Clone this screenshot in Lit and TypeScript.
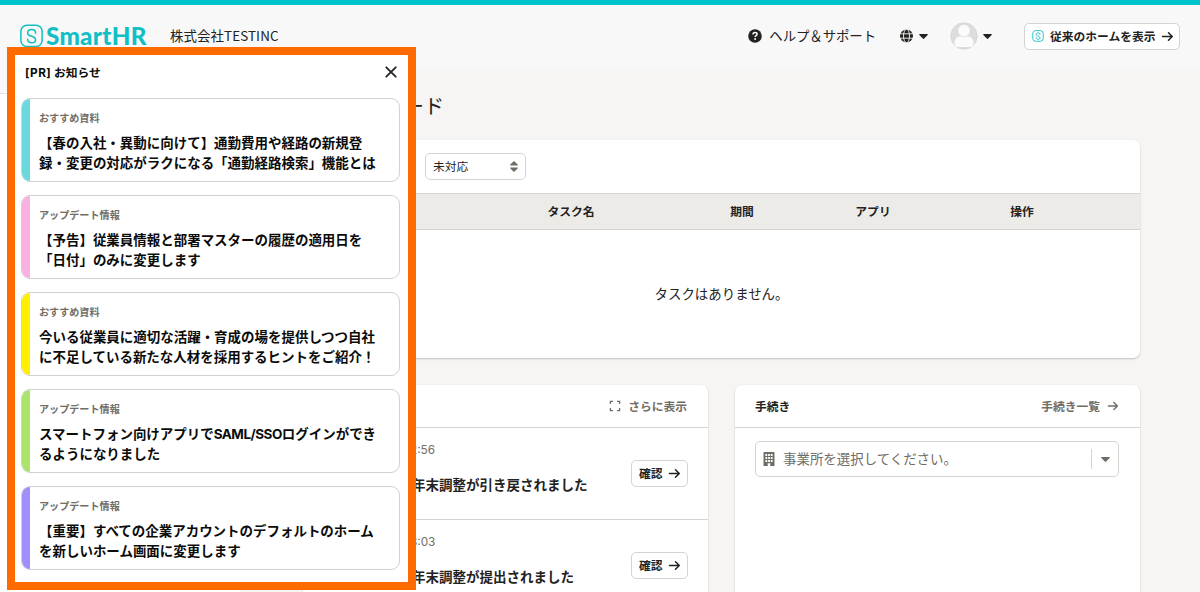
import { LitElement, html, svg, css } from "lit";
import { customElement, property } from "lit/decorators.js";

const arrow = (size: number) => html`<svg class="arrow" width=${size} height=${size} viewBox="0 0 12 12" fill="none" stroke="currentColor" stroke-width="1.4" stroke-linecap="round" stroke-linejoin="round"><path d="M1.4 6H10.4M6.9 2.5L10.4 6L6.9 9.5"/></svg>`;
const caret = html`<svg width="9" height="5" viewBox="0 0 9 5" fill="currentColor"><path d="M.7 0H8.3Q9.3.2 8.6 1L5.2 4.6Q4.5 5.2 3.8 4.6L.4 1Q-.3.2.7 0Z"/></svg>`;
const sMark = svg`<path stroke-linecap="round" d="M15.6 9.2C15.6 6.9 13.8 5.6 11.6 5.6C9.4 5.6 7.7 7 7.7 8.9C7.7 10.5 8.7 11.3 10.2 11.8L13 12.8C14.7 13.4 15.6 14.2 15.6 15.7C15.6 17.5 13.9 18.8 11.7 18.8C9.4 18.8 7.6 17.5 7.6 15.2"/>`;

interface Notice { kind: string; lines: unknown[]; color: string; }

const notices: Notice[] = [
  { kind: "おすすめ資料", lines: ["【春の入社・異動に向けて】通勤費用や経路の新規登", "録・変更の対応がラクになる「通勤経路検索」機能とは"], color: "#69d9de" },
  { kind: "アップデート情報", lines: ["【予告】従業員情報と部署マスターの履歴の適用日を", "「日付」のみに変更します"], color: "#f8b1e0" },
  { kind: "おすすめ資料", lines: ["今いる従業員に適切な活躍・育成の場を提供しつつ自社", "に不足している新たな人材を採用するヒントをご紹介！"], color: "#fff000" },
  { kind: "アップデート情報", lines: [html`スマートフォン向けアプリで<span class="latin">SAML/SSO</span>ログインができ`, "るようになりました"], color: "#abe46a" },
  { kind: "アップデート情報", lines: ["【重要】すべての企業アカウントのデフォルトのホーム", "を新しいホーム画面に変更します"], color: "#9f8ffa" },
];

@customElement("notice-card")
export class NoticeCard extends LitElement {
  @property({ attribute: false }) notice!: Notice;
  static styles = css`
    :host { display: block; }
    .card { box-sizing: border-box; height: 84px; display: flex; border: 1px solid #d2d1cf; border-radius: 9px; overflow: hidden; background: #fff; }
    .stripe { flex: none; width: 8px; }
    .body { padding: 13px 0 0 9px; white-space: nowrap; }
    .kind { font-size: 10.1px; line-height: 13px; font-weight: 700; color: #706d65; }
    .title { margin-top: 8px; font-size: 13.48px; line-height: 20.2px; font-weight: 700; color: #0b0b0a; }
    .latin { letter-spacing: -0.5px; }
  `;
  render() {
    return html`<div class="card">
      <div class="stripe" style="background:${this.notice.color}"></div>
      <div class="body">
        <div class="kind">${this.notice.kind}</div>
        <div class="title">${this.notice.lines.map((l) => html`<div>${l}</div>`)}</div>
      </div>
    </div>`;
  }
}

@customElement("app-root")
export class AppRoot extends LitElement {
  static styles = css`
    :host { display: block; height: 592px; overflow: hidden; position: relative; background: #f6f5f3; color: #23221e;
      font-family: Inter, "Noto Sans CJK JP", sans-serif; font-size: 13.45px; white-space: nowrap; }
    svg { display: block; flex: none; }
    .top { height: 5px; background: #00c4cc; }
    .header { box-sizing: border-box; height: 62px; background: #f8f8f8; display: flex; align-items: center; padding: 0 20px; }
    .logo { display: flex; align-items: center; color: #12bfc5; }
    .word { margin-left: 3px; width: 101px; padding-bottom: 0; font: 900 24.2px/30px Lato, sans-serif; letter-spacing: 0.3px; }
    .company { margin-left: 23px; padding-bottom: 2px; font-family: "Noto Sans CJK JP", sans-serif; letter-spacing: 0.08px; }
    .help { margin-left: auto; display: flex; align-items: center; gap: 7px; }
    .help span { padding-bottom: 2px; letter-spacing: -0.1px; }
    .globe { margin-left: 24px; display: flex; align-items: center; gap: 6px; }
    .user { margin-left: 22px; display: flex; align-items: center; gap: 5px; }
    .btn { box-sizing: border-box; height: 27px; border: 1px solid #d6d3d0; border-radius: 5px; background: #fff; display: flex; align-items: center; font-size: 11.77px; font-weight: 700; }
    .btn span { padding-bottom: 2px; }
    .old { margin-left: 32px; width: 156px; padding-left: 7px; }
    .old .arrow { margin-left: 5px; }
    .old span { margin-left: 6px; }
    .shell { display: flex; height: 525px; }
    .side { box-sizing: border-box; width: 240px; padding-top: 26px; background: #f8f8f8; }
    .nav { height: 100%; border-top: 1px solid #e4e4e3; background: #fff; }
    .main { margin-left: 63px; width: 837px; }
    .heading { margin: 0; padding-top: 25px; font-size: 20.17px; font-weight: 400; line-height: 30px; height: 48px; }
    .panel { background: #fff; border-radius: 7px; box-shadow: 0 1px 2px rgba(3,3,2,.22); overflow: hidden; }
    .tasks { height: 218px; }
    .filter { height: 53px; box-sizing: border-box; padding: 13px 0 0 122px; }
    .select { box-sizing: border-box; width: 101px; height: 27px; border: 1px solid #d6d3d0; border-radius: 5px; padding: 0 7px; display: flex; align-items: center; justify-content: space-between; font-size: 11.77px; }
    .select span { padding-bottom: 2px; }
    .thead { box-sizing: border-box; height: 37px; border-top: 1px solid #d6d3d0; border-bottom: 1px solid #d6d3d0; background: #edebe8; display: grid; grid-template-columns: 180px 176px 166px 96px 202px 17px; align-items: center; text-align: center; font-size: 11.77px; font-weight: 700; }
    .thead span { padding-bottom: 2px; }
    .empty { box-sizing: border-box; height: 128px; padding-bottom: 2px; display: flex; align-items: center; justify-content: center; }
    .cols { margin-top: 27px; display: grid; grid-template-columns: 405px 405px; gap: 27px; }
    .cols .panel { height: 260px; }
    .phead { box-sizing: border-box; height: 43px; border-bottom: 1px solid #d6d3d0; padding: 0 21px 0 20px; display: flex; align-items: center; font-size: 11.77px; font-weight: 700; }
    .phead span { padding-bottom: 2px; }
    .link { margin-left: auto; display: flex; align-items: center; color: #706d65; gap: 7px; }
    .row { box-sizing: border-box; height: 92px; border-bottom: 1px solid #d6d3d0; padding: 0 20px 0 109px; display: flex; align-items: center; justify-content: space-between; }
    .text { padding-bottom: 12px; }
    .time { margin-left: -2px; font-size: 11.77px; line-height: 18px; color: #706d65; }
    .msg { margin-top: 16px; line-height: 20px; font-weight: 700; font-size: 13.5px; }
    .ok { width: 57px; padding: 0 6px 0 7px; justify-content: space-between; }
    .combo { box-sizing: border-box; margin: 13px 21px 0 20px; height: 36px; border: 1px solid #d6d3d0; border-radius: 5px; display: flex; align-items: center; color: #706d65; padding-left: 7px; }
    .combo span { margin-left: 8px; padding-bottom: 2px; }
    .drop { margin-left: auto; height: 20px; width: 26px; border-left: 1px solid #d6d3d0; display: flex; align-items: center; justify-content: center; }
    .pop { position: absolute; left: 7px; top: 47px; box-sizing: border-box; width: 409px; height: 543px; border: 8px solid #ff6b00; background: #fff; color: #0b0b0a; }
    .pophead { box-sizing: border-box; height: 43px; padding: 0 11px 9px 10px; display: flex; align-items: center; justify-content: space-between; font-size: 11.77px; font-weight: 700; }
    .pophead span { padding-bottom: 1px; }
    .pr { letter-spacing: 0.45px; }
    .cards { display: grid; gap: 13px; padding: 0 8px 0 6px; }
  `;

  private row(time: string, msg: string) {
    return html`<div class="row">
      <div class="text"><div class="time">${time}</div><div class="msg">${msg}</div></div>
      <div class="btn ok"><span>確認</span>${arrow(13)}</div>
    </div>`;
  }

  render() {
    return html`
      <div class="top"></div>
      <div class="header">
        <div class="logo">
          <svg width="23" height="24" viewBox="0 0 23 24" fill="none" stroke="currentColor" stroke-width="1.5"><rect x=".9" y="1.2" width="21.2" height="21.4" rx="6"/>${sMark}</svg>
          <div class="word">SmartHR</div>
        </div>
        <div class="company">株式会社TESTINC</div>
        <div class="help">
          <svg width="14" height="14" viewBox="0 0 14 14"><circle cx="7" cy="7" r="6.8" fill="#23221e"/><path d="M5 5.5C5 4.2 5.9 3.5 7 3.5C8.2 3.5 9.1 4.2 9.1 5.2C9.1 6.6 7.2 6.6 7.1 8" fill="none" stroke="#fff" stroke-width="1.5"/><circle cx="7.1" cy="10" r=".95" fill="#fff"/></svg>
          <span>ヘルプ＆サポート</span>
        </div>
        <div class="globe">
          <svg width="13" height="14" viewBox="0 0 13 14"><circle cx="6.5" cy="7" r="6.5" fill="#23221e"/><g fill="none" stroke="#f8f8f8" stroke-width=".9"><ellipse cx="6.5" cy="7" rx="3" ry="6.8"/><path d="M0 4.8H13M0 9.2H13"/></g></svg>
          ${caret}
        </div>
        <div class="user">
          <svg width="28" height="28" viewBox="0 0 28 28"><defs><clipPath id="c"><circle cx="14" cy="14" r="13"/></clipPath></defs><circle cx="14" cy="14" r="13.2" fill="#dddddf" stroke="#d2d2d3" stroke-width=".8"/><g clip-path="url(#c)" fill="#fbfbfb"><circle cx="14" cy="8.7" r="5.9"/><path d="M4.5 25V21C4.5 17 7 14.7 10.3 14.2Q14 16.3 17.7 14.2C21 14.7 23.5 17 23.5 21V25Z"/></g></svg>
          ${caret}
        </div>
        <div class="btn old">
          <svg width="12" height="12" viewBox="0 0 23 24" fill="none" stroke="#12bfc5" stroke-width="1.8"><rect x="1" y="1.2" width="21" height="21.4" rx="6"/>${sMark}</svg>
          <span>従来のホームを表示</span>${arrow(13)}
        </div>
      </div>
      <div class="shell">
        <div class="side"><div class="nav"></div></div>
        <div class="main">
          <h1 class="heading">ダッシュボード</h1>
          <div class="panel tasks">
            <div class="filter"><div class="select"><span>未対応</span>
              <svg width="8" height="11" viewBox="0 0 8 11" fill="#706d65"><path d="M.6 4.5Q-.2 4.4.4 3.6L3.4.5Q4 0 4.6.5L7.6 3.6Q8.2 4.4 7.4 4.5ZM.6 6.5Q-.2 6.6.4 7.4L3.4 10.5Q4 11 4.6 10.5L7.6 7.4Q8.2 6.6 7.4 6.5Z"/></svg></div></div>
            <div class="thead"><span></span><span>タスク名</span><span>期間</span><span>アプリ</span><span>操作</span></div>
            <div class="empty">タスクはありません。</div>
          </div>
          <div class="cols">
            <div class="panel">
              <div class="phead"><div class="link">
                <svg width="12" height="12" viewBox="0 0 12 12" fill="none" stroke="currentColor" stroke-width="1.3"><path d="M1.4 4V1.4H4M8 1.4H10.6V4M10.6 8V10.6H8M4 10.6H1.4V8"/></svg><span>さらに表示</span></div></div>
              ${this.row("2:56", "年末調整が引き戻されました")}
              ${this.row("3:03", "年末調整が提出されました")}
            </div>
            <div class="panel">
              <div class="phead"><span>手続き</span><div class="link"><span>手続き一覧</span>${arrow(12)}</div></div>
              <div class="combo">
                <svg width="12" height="14" viewBox="0 0 12 14"><path fill="#706d65" fill-rule="evenodd" d="M1.2 0H10.8Q11.5 0 11.5.8V14H7.3V11.2H4.7V14H.5V.8Q.5 0 1.2 0ZM2.4 2V4H4.2V2ZM5.1 2V4H6.9V2ZM7.8 2V4H9.6V2ZM2.4 5V7H4.2V5ZM5.1 5V7H6.9V5ZM7.8 5V7H9.6V5ZM2.4 8V10H4.2V8ZM5.1 8V10H6.9V8ZM7.8 8V10H9.6V8Z"/></svg>
                <span>事業所を選択してください。</span>
                <div class="drop">${caret}</div>
              </div>
            </div>
          </div>
        </div>
      </div>
      <div class="pop">
        <div class="pophead"><span><span class="pr">[PR]</span> お知らせ</span>
          <svg width="12" height="12" viewBox="0 0 12 12" stroke="#23221e" stroke-width="1.8" stroke-linecap="round"><path d="M1.3 1.3L10.7 10.7M10.7 1.3L1.3 10.7"/></svg></div>
        <div class="cards">${notices.map((n) => html`<notice-card .notice=${n}></notice-card>`)}</div>
      </div>`;
  }
}
